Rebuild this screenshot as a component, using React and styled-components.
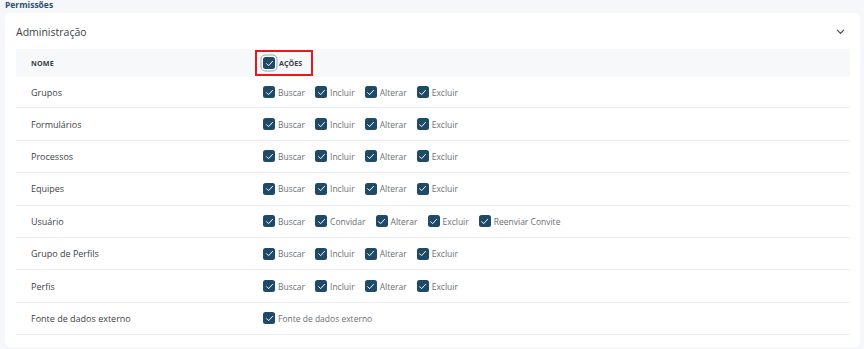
import styled, { createGlobalStyle } from 'styled-components'

const GlobalStyle = createGlobalStyle`
  html, body {
    margin: 0;
    padding: 0;
    background: #f6f7fb;
    font-family: "Open Sans", "Noto Sans", sans-serif;
  }
  * { box-sizing: border-box; }
`

const Page = styled.div`
  width: 864px;
  height: 349px;
  padding: 0 4px 0 5px;
  overflow: hidden;
`

const SectionTitle = styled.div`
  font-size: 8.5px;
  font-weight: 700;
  color: #2c4d6b;
  height: 13px;
  line-height: 10px;
`

const Card = styled.div`
  background: #fff;
  border-radius: 6px;
  padding: 0 10px 12px 11px;
`

const CardHeader = styled.div`
  display: flex;
  align-items: center;
  justify-content: space-between;
  height: 36px;
  padding-top: 1px;
  font-size: 10.5px;
  color: #3a3f45;
`

const Chevron = styled.svg`
  width: 11px;
  height: 11px;
  margin-right: 4px;
`

const Table = styled.div`
  width: 834px;
`

const HeaderRow = styled.div`
  display: grid;
  grid-template-columns: 247px 1fr;
  align-items: center;
  height: 28px;
  background: #f7f8fa;
`

const Row = styled.div`
  display: grid;
  grid-template-columns: 247px 1fr;
  align-items: center;
  height: ${p => p.$h}px;
  border-bottom: 1px solid #ececef;
`

const HeadCell = styled.div`
  padding-left: 15px;
  font-size: 7.2px;
  font-weight: 700;
  color: #3c4046;
  letter-spacing: 0.1px;
`

const NameCell = styled.div`
  padding-left: 15px;
  font-size: 9px;
  color: #3b3f44;
`

const ActionsHead = styled.div`
  position: relative;
  display: flex;
  align-items: center;
  gap: 4px;
  font-size: 7.2px;
  font-weight: 700;
  color: #3c4046;
`

const Highlight = styled.div`
  position: absolute;
  left: -8px;
  top: -7px;
  width: 58px;
  height: 26px;
  border: 2px solid #e41b1b;
  pointer-events: none;
`

const Actions = styled.div`
  display: flex;
  align-items: center;
  gap: 10px;
`

const Item = styled.label`
  display: flex;
  align-items: center;
  gap: 3px;
  font-size: 8.5px;
  color: #6b6f75;
`

const Box = styled.span`
  width: 12px;
  height: 12px;
  border-radius: 2.5px;
  background: #1e4a68;
  display: inline-flex;
  align-items: center;
  justify-content: center;
  box-shadow: ${p => (p.$focus ? '0 0 0 1.5px #fff, 0 0 0 2.5px #8fa6b8' : 'none')};
`

const Check = ({ focus }) => (
  <Box $focus={focus}>
    <svg width="9" height="9" viewBox="0 0 10 10">
      <path d="M1.8 5.2 L4 7.4 L8.4 2.6" fill="none" stroke="#fff" strokeWidth="1.1" strokeLinecap="round" strokeLinejoin="round" />
    </svg>
  </Box>
)

const rows = [
  ['Grupos', ['Buscar', 'Incluir', 'Alterar', 'Excluir'], 31.4],
  ['Formulários', ['Buscar', 'Incluir', 'Alterar', 'Excluir'], 32.4],
  ['Processos', ['Buscar', 'Incluir', 'Alterar', 'Excluir'], 32.4],
  ['Equipes', ['Buscar', 'Incluir', 'Alterar', 'Excluir'], 32.4],
  ['Usuário', ['Buscar', 'Convidar', 'Alterar', 'Excluir', 'Reenviar Convite'], 32.4],
  ['Grupo de Perfils', ['Buscar', 'Incluir', 'Alterar', 'Excluir'], 32.4],
  ['Perfis', ['Buscar', 'Incluir', 'Alterar', 'Excluir'], 32.4],
  ['Fonte de dados externo', ['Fonte de dados externo'], 32.4],
]

export default function App() {
  return (
    <Page>
      <GlobalStyle />
      <SectionTitle>Permissões</SectionTitle>
      <Card>
        <CardHeader>
          <span>Administração</span>
          <Chevron viewBox="0 0 12 12">
            <path d="M2.5 4.5 L6 8 L9.5 4.5" fill="none" stroke="#4a5058" strokeWidth="1.4" strokeLinecap="round" strokeLinejoin="round" />
          </Chevron>
        </CardHeader>
        <Table>
          <HeaderRow>
            <HeadCell>NOME</HeadCell>
            <ActionsHead>
              <Check focus />
              <span>AÇÕES</span>
              <Highlight />
            </ActionsHead>
          </HeaderRow>
          {rows.map(([name, actions, h]) => (
            <Row key={name} $h={h}>
              <NameCell>{name}</NameCell>
              <Actions>
                {actions.map(a => (
                  <Item key={a}>
                    <Check />
                    <span>{a}</span>
                  </Item>
                ))}
              </Actions>
            </Row>
          ))}
        </Table>
      </Card>
    </Page>
  )
}
